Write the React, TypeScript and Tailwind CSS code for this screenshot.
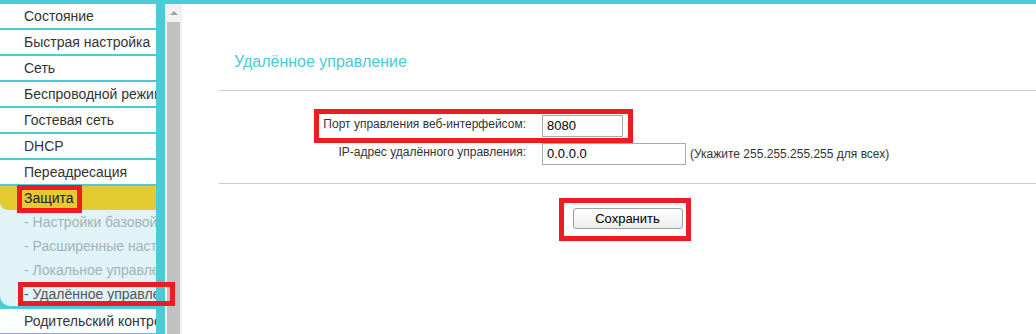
import React from "react";

const teal = "#4acbd6";

function MenuItem({ label }: { label: string }) {
  return (
    <div className="h-[26px] border-b-[2px] border-[#4acbd6] bg-white pl-[24px] text-[14px] leading-[24px] text-[#333] whitespace-nowrap overflow-hidden">
      {label}
    </div>
  );
}

function SubItem({ label, active }: { label: string; active?: boolean }) {
  return (
    <div
      className={
        "h-[24px] pl-[24px] text-[14px] leading-[24px] whitespace-nowrap overflow-hidden " +
        (active ? "text-[#555]" : "text-[#a3b2b6]")
      }
    >
      {label}
    </div>
  );
}

export default function App() {
  return (
    <div
      className="relative w-[1036px] h-[334px] overflow-hidden bg-white flex flex-col"
      style={{ fontFamily: '"Liberation Sans", Arial, sans-serif' }}
    >
      <div className="h-[4px] bg-[#4acbd6] shrink-0" />
      <div className="flex flex-1 min-h-0">
        {/* Sidebar */}
        <div className="w-[165px] bg-[#4acbd6] shrink-0">
          <div className="w-[156px] overflow-hidden">
            <MenuItem label="Состояние" />
            <MenuItem label="Быстрая настройка" />
            <MenuItem label="Сеть" />
            <MenuItem label="Беспроводной режим" />
            <MenuItem label="Гостевая сеть" />
            <MenuItem label="DHCP" />
            <MenuItem label="Переадресация" />
            <div className="bg-[#4acbd6] pb-[3px]">
              <div className="bg-[#e0f4f7] rounded-bl-[10px] overflow-hidden">
                <div className="h-[24px] bg-[#e3c932] rounded-bl-[8px] pl-[24px] text-[14px] leading-[24px] text-[#222]">
                  Защита
                </div>
                <SubItem label="- Настройки базовой защиты" />
                <SubItem label="- Расширенные настройки защиты" />
                <SubItem label="- Локальное управление" />
                <SubItem label="- Удалённое управление" active />
              </div>
            </div>
            <MenuItem label="Родительский контроль" />
          </div>
        </div>
        {/* Scrollbar */}
        <div className="w-[17px] bg-[#f1f1f1] shrink-0 flex flex-col items-center">
          <div className="h-[18px] w-full flex items-center justify-center">
            <div className="w-0 h-0 border-l-[4px] border-r-[4px] border-b-[4px] border-l-transparent border-r-transparent border-b-[#a3a3a3]" />
          </div>
          <div className="flex-1 w-[13px] bg-[#c1c1c1]" />
        </div>
        {/* Content */}
        <div className="flex-1 pl-[37px]">
          <div className="pl-[15px] mt-[49px] text-[16px] leading-[18px] text-[#4acbd6]">
            Удалённое управление
          </div>
          <div className="mt-[19px] h-px bg-[#cccccc]" />
          <div className="mt-[24px] grid grid-cols-[307px_auto] gap-x-[16px] gap-y-[6px] items-center">
            <div className="text-right text-[12px] text-[#333] leading-[14px] -translate-y-[2px]">
              Порт управления веб-интерфейсом:
            </div>
            <div>
              <div className="w-[81px] h-[22px] border border-[#a9a9a9] pl-[4px] text-[13px] leading-[20px] text-black">
                8080
              </div>
            </div>
            <div className="text-right text-[12px] text-[#333] leading-[14px] -translate-y-[2px]">
              IP-адрес удалённого управления:
            </div>
            <div className="flex items-center">
              <div className="w-[144px] h-[22px] border border-[#a9a9a9] pl-[4px] text-[13px] leading-[20px] text-black">
                0.0.0.0
              </div>
              <span className="ml-[4px] text-[12px] text-[#333]">
                (Укажите 255.255.255.255 для всех)
              </span>
            </div>
          </div>
          <div className="mt-[18px] h-px bg-[#cccccc]" />
          <div className="mt-[24px] flex justify-center">
            <button className="w-[110px] h-[21px] rounded-[3px] border border-[#a0a0a0] bg-gradient-to-b from-white to-[#ececec] text-[13px] leading-[19px] text-black">
              Сохранить
            </button>
          </div>
        </div>
      </div>

      {/* Red annotation boxes */}
      <div className="absolute left-[17px] top-[185px] w-[65px] h-[28px] border-[5px] border-[#ed1c24]" />
      <div className="absolute left-[18px] top-[282px] w-[157px] h-[24px] border-[5px] border-[#ed1c24]" />
      <div className="absolute left-[314px] top-[109px] w-[319px] h-[34px] border-[5px] border-[#ed1c24]" />
      <div className="absolute left-[559px] top-[198px] w-[132px] h-[43px] border-[5px] border-[#ed1c24]" />
      <span className="hidden">{teal}</span>
    </div>
  );
}
